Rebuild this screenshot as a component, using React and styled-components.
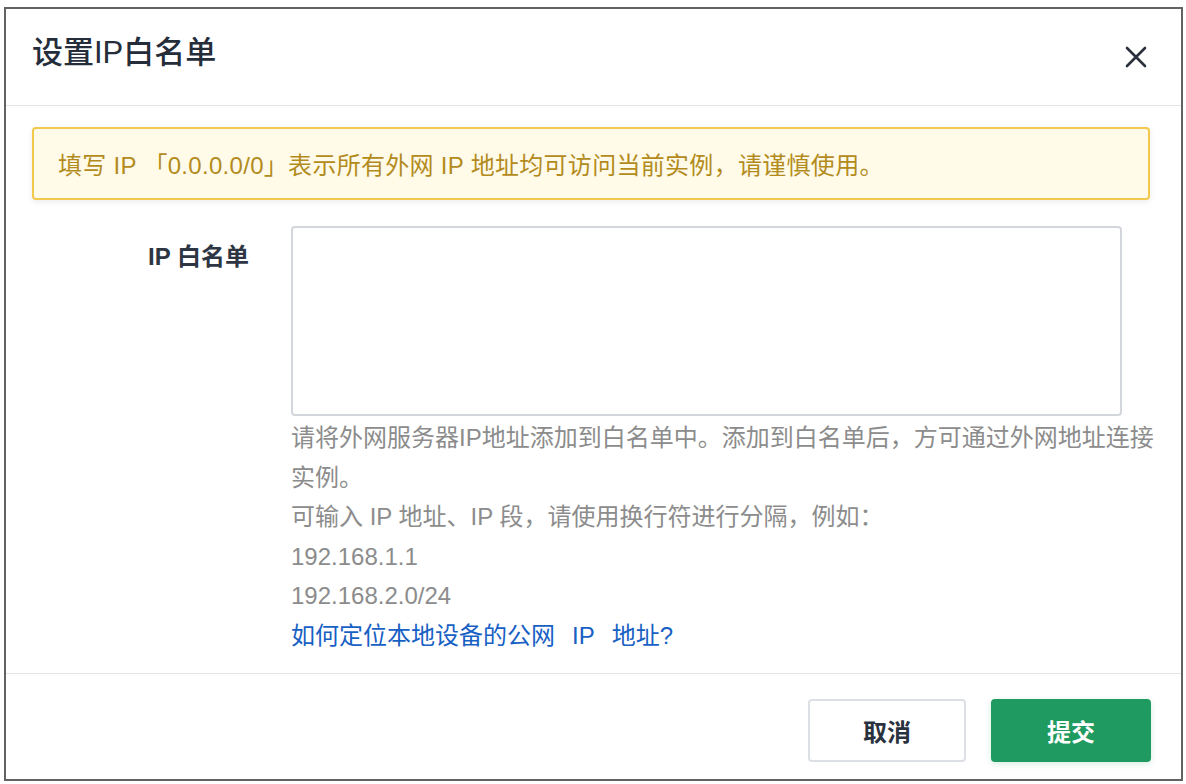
import React from 'react';
import styled, { createGlobalStyle } from 'styled-components';

const GlobalStyle = createGlobalStyle`
  body {
    margin: 0;
    background: #ffffff;
    font-family: 'Liberation Sans', 'Noto Sans CJK SC', sans-serif;
  }
`;

const Page = styled.div`
  padding: 7px 0 0 4px;
`;

const Dialog = styled.div`
  box-sizing: border-box;
  width: 1179px;
  height: 774px;
  border: 2px solid #626262;
  background: #fff;
  display: flex;
  flex-direction: column;
`;

const Header = styled.div`
  box-sizing: border-box;
  height: 97px;
  padding: 24px 30px 0 26px;
  display: flex;
  align-items: flex-start;
  justify-content: space-between;
  border-bottom: 1px solid #e3e5e8;
`;

const Title = styled.h2`
  margin: 0;
  font-size: 31px;
  line-height: 40px;
  font-weight: 500;
  color: #252d3a;
`;

const CloseButton = styled.button`
  width: 30px;
  height: 30px;
  margin-top: 9px;
  padding: 0;
  border: 0;
  background: transparent;
  display: flex;
  align-items: center;
  justify-content: center;
  cursor: pointer;
`;

const Body = styled.div`
  box-sizing: border-box;
  flex: 1;
  padding: 21px 31px 0 26px;
  border-bottom: 1px solid #e3e5e8;
`;

const Alert = styled.div`
  box-sizing: border-box;
  height: 73px;
  padding: 0 24px;
  display: flex;
  align-items: center;
  border: 2px solid #f2c94c;
  border-radius: 4px;
  background: #fffbe8;
  box-shadow: 0 2px 6px rgba(0, 0, 0, 0.08);
  color: #b38b1d;
  font-size: 24px;
  letter-spacing: 0.3px;
`;

const FormRow = styled.div`
  margin-top: 26px;
  display: grid;
  grid-template-columns: 217px 1fr;
  column-gap: 42px;
`;

const Label = styled.label`
  padding-top: 12px;
  text-align: right;
  font-size: 24px;
  line-height: 38px;
  font-weight: 600;
  color: #2e3644;
`;

const Field = styled.div`
  display: flex;
  flex-direction: column;
  margin-right: -12px;
`;

const TextArea = styled.textarea`
  box-sizing: border-box;
  width: 831px;
  height: 190px;
  border: 2px solid #d3d6db;
  border-radius: 4px;
  resize: none;
  outline: none;
  font-family: inherit;
  font-size: 24px;
`;

const Help = styled.div`
  margin-top: 2px;
  font-size: 24px;
  line-height: 39.5px;
  color: #8c8c8c;
`;

const HelpLine = styled.div``;

const Link = styled.a`
  display: block;
  color: #1760c4;
  text-decoration: none;
  font-size: 24px;
  line-height: 39px;
`;

const Spaced = styled.span`
  margin: 0 17px;
`;

const Footer = styled.div`
  box-sizing: border-box;
  height: 105px;
  padding: 25px 30px 0 0;
  display: flex;
  justify-content: flex-end;
  gap: 25px;
`;

const Button = styled.button`
  box-sizing: border-box;
  width: ${({ $w }) => $w}px;
  height: 63px;
  border-radius: 4px;
  font-family: inherit;
  font-size: 24px;
  font-weight: 600;
  cursor: pointer;
  border: 2px solid ${({ $primary }) => ($primary ? '#1f9a60' : '#dcdfe4')};
  background: ${({ $primary }) => ($primary ? '#1f9a60' : '#ffffff')};
  color: ${({ $primary }) => ($primary ? '#ffffff' : '#2a3240')};
  box-shadow: ${({ $primary }) => ($primary ? '0 2px 6px rgba(31,154,96,0.18)' : 'none')};
`;

const App = () => (
  <Page>
    <GlobalStyle />
    <Dialog>
      <Header>
        <Title>设置IP白名单</Title>
        <CloseButton aria-label="关闭">
          <svg width="22" height="22" viewBox="0 0 22 22">
            <path d="M2 2 L20 20 M20 2 L2 20" stroke="#29313d" strokeWidth="2.6" strokeLinecap="round" />
          </svg>
        </CloseButton>
      </Header>
      <Body>
        <Alert>填写 IP 「0.0.0.0/0」表示所有外网 IP 地址均可访问当前实例，请谨慎使用。</Alert>
        <FormRow>
          <Label>IP 白名单</Label>
          <Field>
            <TextArea />
            <Help>
              <HelpLine>请将外网服务器IP地址添加到白名单中。添加到白名单后，方可通过外网地址连接实例。</HelpLine>
              <HelpLine>可输入 IP 地址、IP 段，请使用换行符进行分隔，例如：</HelpLine>
              <HelpLine>192.168.1.1</HelpLine>
              <HelpLine>192.168.2.0/24</HelpLine>
            </Help>
            <Link href="#">
              如何定位本地设备的公网<Spaced>IP</Spaced>地址?
            </Link>
          </Field>
        </FormRow>
      </Body>
      <Footer>
        <Button $w={158}>取消</Button>
        <Button $w={160} $primary>提交</Button>
      </Footer>
    </Dialog>
  </Page>
);

export default App;
